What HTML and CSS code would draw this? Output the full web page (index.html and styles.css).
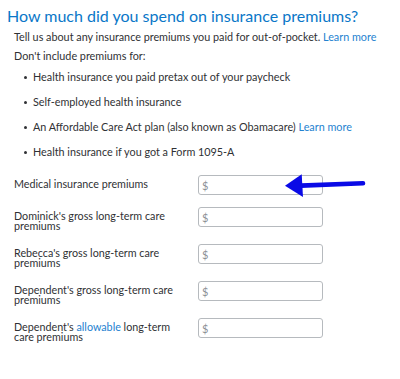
FILE: index.html
```html
<!DOCTYPE html>
<html>
<head>
<meta charset="utf-8">
<link rel="stylesheet" href="styles.css">
</head>
<body>
<div class="page">
  <h1 class="title">How much did you spend on insurance premiums?</h1>
  <p class="intro">Tell us about any insurance premiums you paid for out-of-pocket. <a class="link">Learn more</a></p>
  <p class="intro">Don't include premiums for:</p>
  <ul class="list">
    <li>Health insurance you paid pretax out of your paycheck</li>
    <li>Self-employed health insurance</li>
    <li>An Affordable Care Act plan (also known as Obamacare) <a class="link">Learn more</a></li>
    <li>Health insurance if you got a Form 1095-A</li>
  </ul>
  <div class="form">
    <div class="row first">
      <label class="label">Medical insurance premiums</label>
      <div class="field"><span class="ph">$</span></div>
      <svg class="arrow" width="82" height="26" viewBox="0 0 82 26">
        <line x1="16" y1="12.6" x2="78" y2="10.3" stroke="#0a0ae6" stroke-width="4.6" stroke-linecap="round"/>
        <polygon points="0,12.7 16.7,1.3 18,24" fill="#0a0ae6"/>
      </svg>
    </div>
    <div class="row">
      <label class="label">Dominick's gross long-term care premiums</label>
      <div class="field"><span class="ph">$</span></div>
    </div>
    <div class="row">
      <label class="label">Rebecca's gross long-term care premiums</label>
      <div class="field"><span class="ph">$</span></div>
    </div>
    <div class="row">
      <label class="label">Dependent's gross long-term care premiums</label>
      <div class="field"><span class="ph">$</span></div>
    </div>
    <div class="row">
      <label class="label">Dependent's <a class="link">allowable</a> long-term care premiums</label>
      <div class="field"><span class="ph">$</span></div>
    </div>
  </div>
</div>
</body>
</html>
```
FILE: styles.css
```css
* { box-sizing: border-box; }
html, body { margin: 0; padding: 0; background: #fff; }
body {
  font-family: Lato, "Open Sans", sans-serif;
  color: #2f3134;
  width: 400px;
  height: 379px;
  overflow: hidden;
}
.page { padding: 6px 0 0 7px; }
.title {
  margin: 0;
  font-size: 16px;
  font-weight: 400;
  color: #0a77c8;
  line-height: 20px;
}
.intro {
  margin: 0 0 0 7px;
  font-size: 10.8px;
  line-height: 18.5px;
}
.intro:first-of-type { margin-top: 2px; }
.link { color: #2482d0; }
.list {
  list-style: none;
  margin: 4px 0 0 0;
  padding: 0 0 0 18px;
  font-size: 10.8px;
}
.list li {
  position: relative;
  padding-left: 8px;
  line-height: 15px;
  margin-bottom: 10px;
}
.list li:last-child { margin-bottom: 0; }
.list li::before {
  content: "";
  position: absolute;
  left: -1px;
  top: 7px;
  width: 3px;
  height: 3px;
  border-radius: 50%;
  background: #2f3134;
}
.form {
  margin: 15.6px 0 0 7px;
  display: flex;
  flex-direction: column;
  gap: 12px;
}
.row {
  position: relative;
  display: flex;
  align-items: flex-start;
}
.label {
  width: 184px;
  flex: none;
  font-size: 10.75px;
  line-height: 10.5px;
  padding-top: 4px;
  padding-right: 20px;
}
.field {
  width: 125px;
  height: 20px;
  border: 1px solid #b6babe;
  border-radius: 3px;
  padding: 2px 0 0 3px;
  font-size: 11px;
  line-height: 15px;
  color: #8d9196;
}
.arrow {
  position: absolute;
  left: 271px;
  top: -2px;
}
```
